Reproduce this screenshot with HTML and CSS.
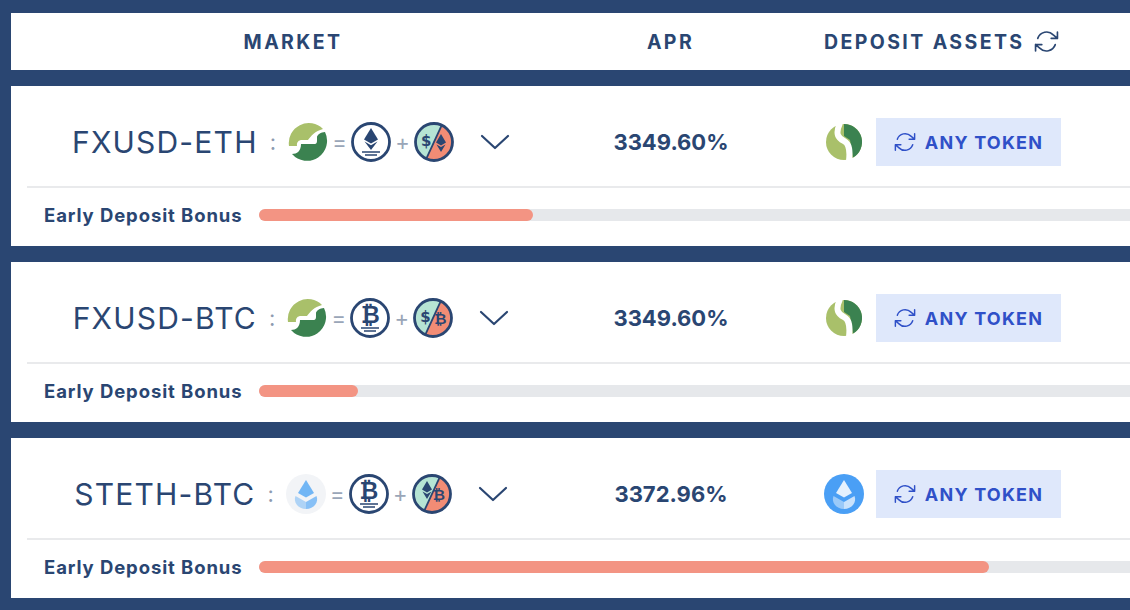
FILE: index.html
```html
<!DOCTYPE html>
<html>
<head>
	<meta charset="utf-8">
	<title>Markets</title>
	<link rel="stylesheet" href="styles.css">
</head>
<body>

<svg class="defs" width="0" height="0">
	<symbol id="i-sync" viewBox="0 0 24 24">
		<path d="M22.5 3v6h-6M1.5 21v-6h6M3.6 9a9 9 0 0 1 14.9-3.4L22.5 9M1.500 15l4 3.400A9 9 0 0 0 20.400 15" fill="none" stroke="currentColor" stroke-width="1.600" stroke-linecap="round" stroke-linejoin="round"/>
	</symbol>
	<symbol id="i-fx" viewBox="0 0 40 40">
		<path d="M35 7A20 20 0 0 0 1 24L9 24C8.500 21 10 18 14 18L20 18C23 14 27 9 35 7Z" fill="#a9c06a"/>
		<path d="M37 10A20 20 0 0 1 4 32C9 32 13 29 13 22L27 22C28 22 29 21 29 19L29 15C29 13 33 10 37 10Z" fill="#3b8250"/>
	</symbol>
	<symbol id="i-coin" viewBox="0 0 36 36">
		<circle cx="18" cy="18" r="18" fill="#a9c06a"/>
		<path d="M18 0A18 18 0 0 1 27 33.600L24 16 18 12Z" fill="#3b8250"/>
		<path d="M14 -1C9 10 12 14 18 17C24 20 24 28 23 37" fill="none" stroke="#fff" stroke-width="6"/>
	</symbol>
	<symbol id="i-eth" viewBox="0 0 40 40">
		<circle cx="20" cy="20" r="18.500" fill="#fff" stroke="#2a4672" stroke-width="2.800"/>
		<path d="M20 6l7 11.500-7 4-7-4z" fill="#2a4672"/>
		<path d="M13.500 19.500l6.500 3.800 6.500-3.800-6.500 8.500z" fill="#2a4672"/>
		<path d="M11 30h18M14 33h12" stroke="#2a4672" stroke-width="1.400"/>
	</symbol>
	<symbol id="i-ring" viewBox="0 0 40 40">
		<circle cx="20" cy="20" r="18.500" fill="#fff" stroke="#2a4672" stroke-width="2.800"/>
		<path d="M11 30h18M14 33h12" stroke="#2a4672" stroke-width="1.400"/>
	</symbol>
	<symbol id="i-split" viewBox="0 0 40 40">
		<circle cx="20" cy="20" r="19" fill="#b6e4d4"/>
		<path d="M28 2.700A19 19 0 0 1 12 37.300z" fill="#f28c75"/>
		<path d="M28 2.700L12 37.300" stroke="#2a4672" stroke-width="1.800"/>
		<circle cx="20" cy="20" r="18.500" fill="none" stroke="#2a4672" stroke-width="2.800"/>
	</symbol>
	<symbol id="i-drop" viewBox="0 0 40 40">
		<path d="M20 6l8 13-8 4.500-8-4.500z" fill="currentColor" opacity=".85"/>
		<path d="M9.500 22L20 28v7C12 35 7 28 9.500 22z" fill="currentColor" opacity=".45"/>
		<path d="M30.500 22L20 28v7C28 35 33 28 30.500 22z" fill="currentColor" opacity=".7"/>
	</symbol>
</svg>

<div class="head">
	<div class="col-market">MARKET</div>
	<div class="col-apr">APR</div>
	<div class="col-deposit">DEPOSIT ASSETS <svg class="head-sync"><use href="#i-sync"/></svg></div>
</div>

<div class="card">
	<div class="row">
		<div class="col-market pair">
			<span class="pair-name">FXUSD-ETH</span>
			<span class="colon">:</span>
			<svg class="token"><use href="#i-fx"/></svg>
			<span class="op">=</span>
			<svg class="token"><use href="#i-eth"/></svg>
			<span class="op">+</span>
			<span class="split">
				<svg class="token"><use href="#i-split"/></svg>
				<span class="mini mini-l">$</span>
				<svg class="mini-eth mini-r" viewBox="0 0 12 18"><path d="M6 0l5 8.500-5 3-5-3zM1.500 10.500L6 13l4.500-2.500L6 18z"/></svg>
			</span>
			<svg class="chevron" viewBox="0 0 30 16"><path d="M2 2l13 12L28 2"/></svg>
		</div>
		<div class="col-apr apr">3349.60%</div>
		<div class="col-deposit deposit">
			<svg class="coin"><use href="#i-coin"/></svg>
			<a href="#" class="btn"><svg class="btn-sync"><use href="#i-sync"/></svg>ANY TOKEN</a>
		</div>
	</div>
	<div class="bonus">
		<span class="bonus-label">Early Deposit Bonus</span>
		<div class="track"><div class="fill" style="width: 274px"></div></div>
	</div>
</div>

<div class="card">
	<div class="row">
		<div class="col-market pair">
			<span class="pair-name">FXUSD-BTC</span>
			<span class="colon">:</span>
			<svg class="token"><use href="#i-fx"/></svg>
			<span class="op">=</span>
			<span class="split">
				<svg class="token"><use href="#i-ring"/></svg>
				<span class="btc-big">₿</span>
			</span>
			<span class="op">+</span>
			<span class="split">
				<svg class="token"><use href="#i-split"/></svg>
				<span class="mini mini-l">$</span>
				<span class="mini mini-r">₿</span>
			</span>
			<svg class="chevron" viewBox="0 0 30 16"><path d="M2 2l13 12L28 2"/></svg>
		</div>
		<div class="col-apr apr">3349.60%</div>
		<div class="col-deposit deposit">
			<svg class="coin"><use href="#i-coin"/></svg>
			<a href="#" class="btn"><svg class="btn-sync"><use href="#i-sync"/></svg>ANY TOKEN</a>
		</div>
	</div>
	<div class="bonus">
		<span class="bonus-label">Early Deposit Bonus</span>
		<div class="track"><div class="fill" style="width: 99px"></div></div>
	</div>
</div>

<div class="card">
	<div class="row">
		<div class="col-market pair">
			<span class="pair-name">STETH-BTC</span>
			<span class="colon">:</span>
			<span class="drop-wrap"><svg class="drop"><use href="#i-drop"/></svg></span>
			<span class="op">=</span>
			<span class="split">
				<svg class="token"><use href="#i-ring"/></svg>
				<span class="btc-big">₿</span>
			</span>
			<span class="op">+</span>
			<span class="split">
				<svg class="token"><use href="#i-split"/></svg>
				<svg class="mini-eth mini-l" viewBox="0 0 12 18"><path d="M6 0l5 8.500-5 3-5-3zM1.500 10.500L6 13l4.500-2.500L6 18z"/></svg>
				<span class="mini mini-r">₿</span>
			</span>
			<svg class="chevron" viewBox="0 0 30 16"><path d="M2 2l13 12L28 2"/></svg>
		</div>
		<div class="col-apr apr">3372.96%</div>
		<div class="col-deposit deposit">
			<span class="drop-coin"><svg class="drop"><use href="#i-drop"/></svg></span>
			<a href="#" class="btn"><svg class="btn-sync"><use href="#i-sync"/></svg>ANY TOKEN</a>
		</div>
	</div>
	<div class="bonus">
		<span class="bonus-label">Early Deposit Bonus</span>
		<div class="track"><div class="fill" style="width: 730px"></div></div>
	</div>
</div>

</body>
</html>
```

FILE: styles.css
```css
html, body {
	height: 100%;
}
body {
	margin: 0;
	padding: 13px 0 0 11px;
	box-sizing: border-box;
	overflow: hidden;
	color: #2a4672;
	font-family: Inter, Lato, sans-serif;
	background: #2a4672;
}
.defs {
	display: block;
	height: 0;
}

/* columns */
.col-market {
	width: 564px;
	flex: none;
}
.col-apr {
	width: 191px;
	flex: none;
	text-align: center;
}
.col-deposit {
	flex: 1;
	padding-left: 58px;
}

.head {
	display: flex;
	align-items: center;
	height: 57px;
	margin-bottom: 16px;
	font-size: 19.500px;
	font-weight: 700;
	letter-spacing: 2.400px;
	background: #fff;
}
.head .col-market {
	text-align: center;
}
.head .col-deposit {
	display: flex;
	align-items: center;
	gap: 9px;
}
.head-sync {
	width: 25px;
	height: 25px;
}

.card {
	height: 160px;
	margin-bottom: 16px;
	background: #fff;
}
.row {
	display: flex;
	align-items: center;
	height: 88px;
	padding-top: 12px;
	margin-left: 16px;
	border-bottom: 2px solid #e9eaec;
}
.row .col-market {
	width: 528px;
}

.pair {
	display: flex;
	align-items: center;
	justify-content: center;
}
.pair-name {
	font-size: 30px;
	letter-spacing: 1.200px;
	white-space: nowrap;
}
.colon {
	margin: 0 12px;
	font-size: 22px;
	color: #8d9bb0;
}
.token {
	display: block;
	width: 40px;
	height: 40px;
	flex: none;
}
.op {
	width: 23px;
	font-size: 22px;
	text-align: center;
	color: #9aa6b8;
}
.split {
	position: relative;
	width: 40px;
	height: 40px;
	flex: none;
}
.btc-big {
	position: absolute;
	top: 3px;
	left: 0;
	width: 40px;
	font-family: "DejaVu Sans", sans-serif;
	font-size: 23px;
	font-weight: 700;
	line-height: 28px;
	text-align: center;
}
.mini {
	position: absolute;
	top: 9px;
	font-family: "DejaVu Sans", sans-serif;
	font-size: 15px;
	font-weight: 700;
	line-height: 20px;
}
.mini-l {
	left: 7px;
}
.mini-r {
	left: 21px;
	top: 11px;
}
.mini-eth {
	position: absolute;
	width: 12px;
	height: 18px;
	top: 12px;
	fill: #2a4672;
}
.mini-eth.mini-l {
	left: 9px;
	top: 7px;
}
.chevron {
	width: 30px;
	height: 16px;
	margin-left: 26px;
	fill: none;
	stroke: #2a4672;
	stroke-width: 2.200;
	stroke-linecap: round;
	stroke-linejoin: round;
}
.drop-wrap {
	display: flex;
	width: 40px;
	height: 40px;
	flex: none;
	color: #5aaaf5;
	background: #f2f4f7;
	border-radius: 50%;
}
.drop {
	width: 40px;
	height: 40px;
}

.row .col-apr {
	width: 232px;
}
.apr {
	font-size: 22px;
	font-weight: 700;
}
.row .col-deposit {
	padding-left: 39px;
}
.deposit {
	display: flex;
	align-items: center;
	gap: 14px;
}
.coin {
	width: 36px;
	height: 36px;
	flex: none;
}
.drop-coin {
	display: flex;
	width: 40px;
	height: 40px;
	margin: 0 -2px;
	flex: none;
	color: #fff;
	background: #4a9ff5;
	border-radius: 50%;
}
.btn {
	display: flex;
	align-items: center;
	justify-content: center;
	gap: 9px;
	width: 185px;
	height: 48px;
	color: #2f50c8;
	font-size: 18px;
	font-weight: 700;
	letter-spacing: 1.200px;
	text-decoration: none;
	background: #dfe8fb;
}
.btn-sync {
	width: 22px;
	height: 22px;
}

.bonus {
	display: flex;
	align-items: center;
	gap: 16px;
	height: 54px;
	padding-left: 33px;
}
.bonus-label {
	width: 199px;
	font-size: 18.500px;
	font-weight: 700;
	letter-spacing: .9px;
	white-space: nowrap;
}
.track {
	flex: 1;
	height: 12px;
	background: #e6e8eb;
	border-radius: 6px 0 0 6px;
}
.fill {
	height: 12px;
	background: #f39483;
	border-radius: 6px;
}
```
